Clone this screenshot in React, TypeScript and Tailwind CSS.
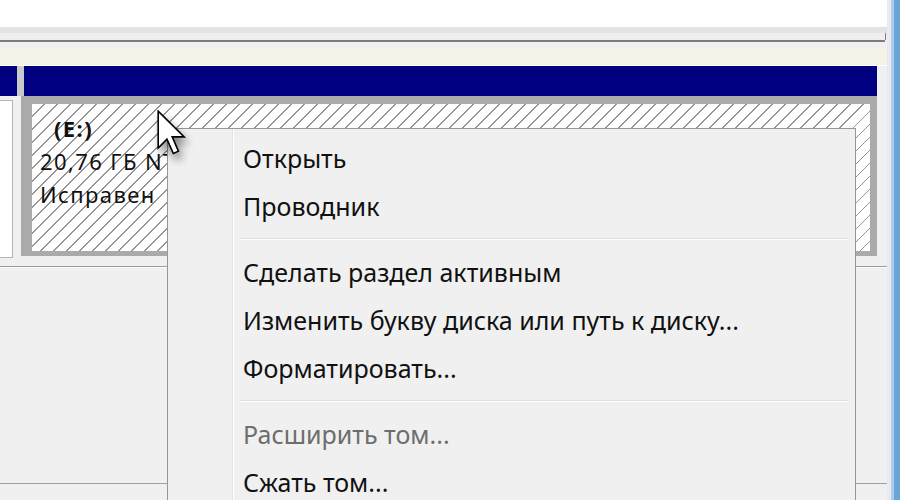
import React from 'react';

const items: (string | null | { label: string; disabled: boolean })[] = [
  'Открыть',
  'Проводник',
  null,
  'Сделать раздел активным',
  'Изменить букву диска или путь к диску...',
  'Форматировать...',
  null,
  { label: 'Расширить том...', disabled: true },
  'Сжать том...',
];

const Cursor = () => (
  <svg
    width="30"
    height="46"
    viewBox="0 0 13 20"
    className="drop-shadow-[3px_6px_4px_rgba(0,0,0,0.45)]"
  >
    <path
      d="M0.5 0.5 L0.5 16.5 L4.3 12.7 L7.1 18.9 L9.3 17.9 L6.6 11.7 L11.8 11.7 Z"
      fill="#ffffff"
      stroke="#000000"
      strokeWidth="0.7"
      strokeLinejoin="miter"
    />
  </svg>
);

const ContextMenu = () => (
  <div className="absolute left-[167px] top-[128px] w-[689px] h-[400px] bg-[#f0f0f0] border border-[#979797] flex font-['Noto_Sans',sans-serif] text-[25px]">
    {/* icon gutter */}
    <div className="w-[64px] shrink-0" />
    <div className="w-px bg-[#e2e3e3]" />
    <div className="w-px bg-white" />
    <div className="flex-1 flex flex-col pt-[5px]">
      {items.map((item, i) => {
        if (item === null) {
          return (
            <div key={i} className="h-[18px] flex flex-col justify-center ml-[6px] mr-[7px]">
              <div className="h-px bg-[#e0e0e0]" />
              <div className="h-px bg-white" />
            </div>
          );
        }
        const label = typeof item === 'string' ? item : item.label;
        const disabled = typeof item !== 'string' && item.disabled;
        return (
          <div
            key={i}
            className={`h-[48px] flex items-center pl-[9px] leading-none ${disabled ? 'text-[#6d6d6d]' : 'text-[#111]'}`}
          >
            {label}
          </div>
        );
      })}
    </div>
  </div>
);

export default function App() {
  return (
    <div className="relative w-[900px] h-[500px] overflow-hidden bg-[#f0f0f0] flex">
      <div className="w-[887px] flex flex-col">
        {/* top panel */}
        <div className="h-[27px] bg-white" />
        <div className="h-[6px] bg-[#e3e3e3]" />
        <div className="h-[7px] bg-[#eeeeee] flex justify-end">
          <div className="w-px h-full bg-[#7c7c7c] mr-[1px]" />
        </div>
        <div className="h-[2px] flex">
          <div className="w-[885px] bg-[#7c7c7c]" />
        </div>
        <div className="h-[6px] bg-[#f2efef]" />
        <div className="h-[18px] bg-[#f3f3e8] border-b border-white" />

        {/* disk header */}
        <div className="h-[30px] flex">
          <div className="w-[17px] bg-[#000080]" />
          <div className="w-[7px] bg-[#c9c9c9]" />
          <div className="w-[853px] bg-[#000080]" />
          <div className="flex-1 bg-[#f0f0f0]" />
        </div>

        {/* partitions */}
        <div className="h-[170px] flex items-start">
          <div className="w-[13px] h-[158px] mt-[4px] bg-white border-t border-r border-b border-[#b4b4b4]" />
          <div className="w-[8px]" />
          <div className="w-[856px] h-[160px] border-t-[8px] border-l-[11px] border-r-[7px] border-b-[5px] border-[#aaaaaa] bg-white bg-[image:repeating-linear-gradient(135deg,#ffffff_0px,#ffffff_8px,#959595_8px,#959595_9.2px)]">
            <div className="pt-[8px] pl-[8px] flex flex-col font-['Noto_Sans',sans-serif] text-[22px] tracking-[1.4px] leading-[33px] text-[#111]">
              <span className="pl-[14px] font-bold">(E:)</span>
              <span>20,76 ГБ NTFS</span>
              <span>Исправен</span>
            </div>
          </div>
        </div>

        <div className="h-px bg-[#9a9a9a]" />
        <div className="h-px bg-white" />
        <div className="h-[215px] bg-[#f0f0f0]" />
        <div className="h-px bg-[#a0a0a0]" />
        <div className="flex-1 bg-[#f0f0f0]" />
      </div>

      {/* window frame */}
      <div className="w-[4px] bg-[#ece8f2]" />
      <div className="w-[3px] bg-[#a9cdea]" />
      <div className="w-[6px] bg-[#6aa5d8]" />

      <ContextMenu />

      <div className="absolute left-[157px] top-[110px]">
        <Cursor />
      </div>
    </div>
  );
}
